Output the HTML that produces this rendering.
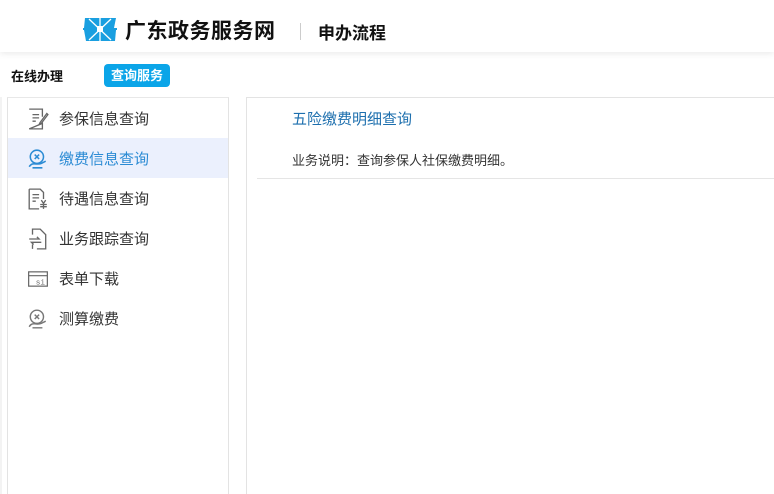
<!DOCTYPE html>
<html><head><meta charset="utf-8"><style>
*{margin:0;padding:0;box-sizing:border-box}
html,body{width:774px;height:494px;overflow:hidden}
body{background:#fff;font-family:"Liberation Sans","Noto Sans CJK SC",sans-serif;position:relative}
.hdr{position:absolute;left:0;top:0;width:774px;height:52px;background:#fff;box-shadow:0 2px 6px rgba(0,0,0,.08)}
.t1{position:absolute;left:125px;top:15px;font-size:21px;font-weight:bold;color:#111;letter-spacing:0.5px}
.div{position:absolute;left:300px;top:23px;width:1px;height:17px;background:#ccc}
.t2{position:absolute;left:318px;top:19px;font-size:17px;font-weight:bold;color:#111}
.sub{position:absolute;left:11px;top:66px;font-size:13px;font-weight:bold;color:#111}
.badge{position:absolute;left:104px;top:64px;width:66px;height:23px;background:#0ba5e8;border-radius:4px;color:#fff;font-size:13px;font-weight:bold;text-align:center;line-height:23px}
.left{position:absolute;left:7px;top:97px;width:222px;height:400px;border:1px solid #e3e3e3;border-top-color:#e8e8e8}
.it{position:absolute;left:0;width:220px;height:40px;font-size:15px;color:#333;line-height:40px}
.it span{position:absolute;left:51px;top:2px}
.it svg{position:absolute;left:19px;top:10px}
.act{background:#ebf0fd;color:#2b8bd4}
.right{position:absolute;left:246px;top:97px;width:540px;height:400px;border:1px solid #e3e3e3}
.rt{position:absolute;left:45px;top:10px;font-size:15px;color:#1d6fae}
.rd{position:absolute;left:45px;top:52px;font-size:13px;color:#333}
.rl{position:absolute;left:10px;top:80px;width:530px;height:1px;background:#e5e5e5}
.edge{position:absolute;left:0;top:97px;width:2px;height:400px;background:#f3f3f3}
</style></head><body>
<div class="hdr">
<svg style="position:absolute;left:83px;top:18px" width="34" height="23" viewBox="0 0 34 23">
<path d="M2 0H33L31 10H1Z" fill="#1a9fe0"/><path d="M1 12H33L32 23H3Z" fill="#1a9fe0"/>
<rect x="0" y="10" width="34" height="2" fill="#1a9fe0"/>
<g stroke="#fff" stroke-width="1.3"><line x1="17" y1="0" x2="17" y2="23"/><line x1="6" y1="1" x2="28" y2="22"/><line x1="28" y1="1" x2="6" y2="22"/></g>
<rect x="14" y="8" width="6" height="6" fill="#fff"/>
</svg>
<div class="t1">广东政务服务网</div><div class="div"></div><div class="t2">申办流程</div>
</div>
<div class="sub">在线办理</div><div class="badge">查询服务</div>
<div class="edge"></div>
<div class="left">
<div class="it" style="top:0"><svg width="22" height="22" viewBox="0 0 20 20" fill="none" stroke="#666" stroke-width="1.2"><path d="M2 1H14V8M14 14V19H2Z"/><path d="M5 6H11M5 9H11M5 12H8"/><path d="M18 5L12 13L11 15L13 14L19 6Z"/></svg><span>参保信息查询</span></div>
<div class="it act" style="top:40px"><svg width="22" height="22" viewBox="0 0 20 20" fill="none" stroke="#2b8bd4" stroke-width="1.4"><circle cx="9" cy="8" r="6"/><path d="M7 6L11 10M11 6L7 10"/><path d="M2 17C5 12 9 16 13 14L17 12M5 18H14"/></svg><span>缴费信息查询</span></div>
<div class="it" style="top:80px"><svg width="22" height="22" viewBox="0 0 20 20" fill="none" stroke="#666" stroke-width="1.2"><path d="M2 1H12L15 4V10M11 19H2V1"/><path d="M5 6H11M5 9H11M5 12H8"/><path d="M13 11L15 14L17 11M12 15H18M12 17H18M15 14V19"/></svg><span>待遇信息查询</span></div>
<div class="it" style="top:120px"><svg width="22" height="22" viewBox="0 0 20 20" fill="none" stroke="#666" stroke-width="1.2"><path d="M5 6V1H12L17 6V19H9M5 15V19"/><path d="M2 10H11L9 8M13 13H4L6 15"/></svg><span>业务跟踪查询</span></div>
<div class="it" style="top:160px"><svg width="22" height="22" viewBox="0 0 20 20" fill="none" stroke="#666" stroke-width="1.1"><rect x="1.5" y="3.5" width="17" height="13"/><path d="M1.5 7H18.5"/><text x="8" y="15" font-size="7" fill="#666" stroke="none" font-family="Liberation Mono">si</text></svg><span>表单下载</span></div>
<div class="it" style="top:200px"><svg width="22" height="22" viewBox="0 0 20 20" fill="none" stroke="#777" stroke-width="1.3"><circle cx="9" cy="8" r="6"/><path d="M7 6L11 10M11 6L7 10"/><path d="M2 17C5 12 9 16 13 14L17 12M5 18H14"/></svg><span>测算缴费</span></div>
</div>
<div class="right">
<div class="rt">五险缴费明细查询</div>
<div class="rd">业务说明：查询参保人社保缴费明细。</div>
<div class="rl"></div>
</div>
</body></html>
